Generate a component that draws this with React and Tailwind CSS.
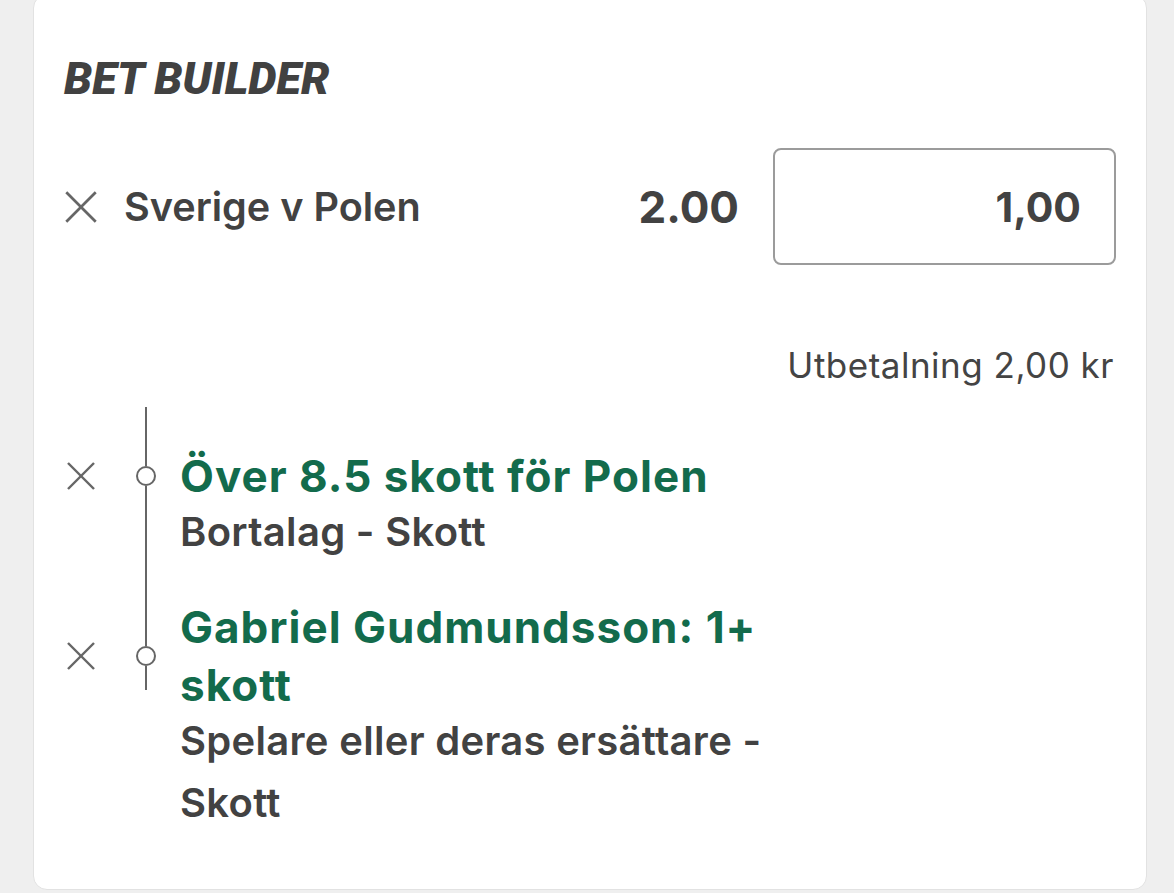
import React from "react";

const XIcon = ({ size = 30 }) => (
  <svg width={size} height={size} viewBox="0 0 30 30" fill="none">
    <line x1="2" y1="2" x2="28" y2="28" stroke="#666666" strokeWidth="2.4" />
    <line x1="28" y1="2" x2="2" y2="28" stroke="#666666" strokeWidth="2.4" />
  </svg>
);

const Line = ({ className = "" }) => <div className={"w-[2px] bg-[#666666] " + className} />;

const Circle = () => (
  <div className="h-[20px] w-[20px] shrink-0 rounded-full border-[2px] border-[#666666] bg-white" />
);

export default function App() {
  const sans = { fontFamily: "Inter, 'Noto Sans', sans-serif" };
  return (
    <div className="h-[893px] w-[1174px] overflow-hidden bg-[#efefef]" style={sans}>
      <div className="ml-[33px] mt-[-6px] h-[896px] w-[1114px] rounded-[14px] border border-[#e2e2e2] bg-white pl-[30px] pr-[30px] pt-[59px]">
        <h1
          className="text-[45px] leading-[50px] font-black italic text-[#414141]"
          style={{ fontFamily: "Roboto, 'Liberation Sans', sans-serif" }}
        >
          BET BUILDER
        </h1>

        <div className="mt-[44px] flex h-[117px] items-center">
          <div className="flex w-[60px] shrink-0 justify-start">
            <XIcon size={34} />
          </div>
          <div className="flex-1 text-[39.6px] leading-[48px] font-semibold text-[#424242]">Sverige v Polen</div>
          <div className="text-[44px] leading-[54px] font-bold text-[#424242]">2.00</div>
          <div className="ml-[34px] flex h-[117px] w-[343px] items-center justify-end rounded-[8px] border-2 border-[#9b9b9b] pr-[33px]">
            <span className="text-[41px] leading-[50px] font-bold text-[#424242]">1,00</span>
          </div>
        </div>

        <div className="mt-[80px] pr-[2px] text-right text-[35px] leading-[40px] tracking-[0.5px] text-[#444444]">
          Utbetalning 2,00 kr
        </div>

        <div className="mt-[22px] grid grid-cols-[72px_20px_1fr]">
          {/* leading line */}
          <div />
          <div className="flex h-[40px] justify-center">
            <Line />
          </div>
          <div />

          {/* item 1 title */}
          <div className="flex items-center">
            <div className="flex w-[34px] justify-center">
              <XIcon size={30} />
            </div>
          </div>
          <div className="flex flex-col items-center">
            <Line className="flex-1" />
            <Circle />
            <Line className="flex-1" />
          </div>
          <div className="max-w-[646px] pl-[24px] text-[44px] leading-[58px] font-bold tracking-[1px] text-[#136b4c]">
            Över 8.5 skott för Polen
          </div>

          {/* item 1 subtitle */}
          <div />
          <div className="flex justify-center">
            <Line />
          </div>
          <div className="-mt-[4px] max-w-[646px] pb-[35px] pl-[24px] text-[40px] leading-[62px] font-semibold tracking-[0.3px] text-[#424242]">
            Bortalag - Skott
          </div>

          {/* item 2 title */}
          <div className="flex items-center">
            <div className="flex w-[34px] justify-center">
              <XIcon size={30} />
            </div>
          </div>
          <div className="flex flex-col items-center">
            <Line className="flex-1" />
            <Circle />
            <div className="flex flex-1 flex-col items-center">
              <Line className="h-[24px]" />
            </div>
          </div>
          <div className="max-w-[646px] pl-[24px] text-[44px] leading-[58px] font-bold tracking-[1px] text-[#136b4c]">
            Gabriel Gudmundsson: 1+ skott
          </div>

          {/* item 2 subtitle */}
          <div />
          <div />
          <div className="-mt-[4px] max-w-[646px] pl-[24px] text-[40px] leading-[62px] font-semibold tracking-[0.3px] text-[#424242]">
            Spelare eller deras ersättare - Skott
          </div>
        </div>
      </div>
    </div>
  );
}
